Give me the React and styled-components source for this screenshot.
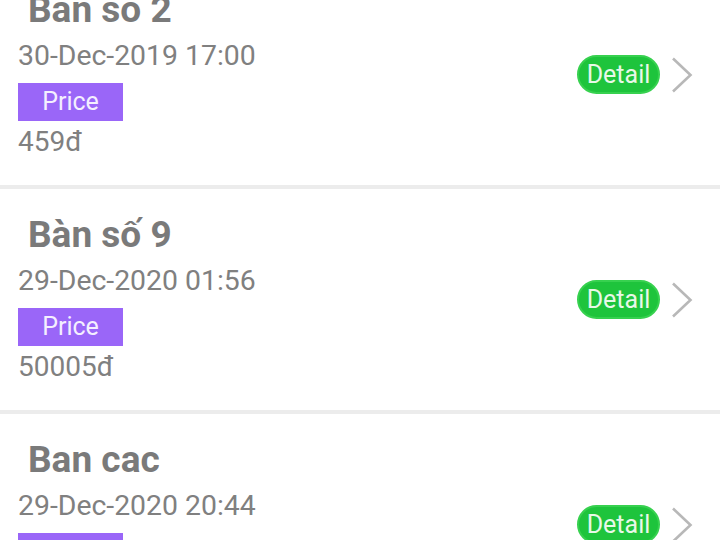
import React from "react"
import styled, { createGlobalStyle } from "styled-components"

const GlobalStyle = createGlobalStyle`
  html, body {
    margin: 0;
    padding: 0;
    background: #ffffff;
    font-family: Roboto, "Noto Sans", sans-serif;
    overflow: hidden;
  }
`

const tables = [
  { name: "Bàn số 2", date: "30-Dec-2019 17:00", price: "459đ" },
  { name: "Bàn số 9", date: "29-Dec-2020 01:56", price: "50005đ" },
  { name: "Ban cac", date: "29-Dec-2020 20:44", price: "1200đ" },
]

const App = () => (
  <>
    <GlobalStyle />
    <List>
      {tables.map((t, i) => (
        <Item key={i}>
          <Info>
            <Title>{t.name}</Title>
            <DateText>{t.date}</DateText>
            <PriceTag>Price</PriceTag>
            <PriceValue>{t.price}</PriceValue>
          </Info>
          <Actions>
            <DetailButton>Detail</DetailButton>
            <Chevron width="22" height="36" viewBox="0 0 22 36">
              <path d="M2 1.5 L19.5 18 L2 34.5" fill="none" stroke="#b8b8b8" strokeWidth="2.6" />
            </Chevron>
          </Actions>
        </Item>
      ))}
    </List>
  </>
)

const List = styled.div`
  margin-top: -36px;
  display: flex;
  flex-direction: column;
`

const Item = styled.div`
  height: 221px;
  display: flex;
  align-items: center;
  justify-content: space-between;
  padding: 0 27px 0 18px;
  border-bottom: 4px solid #ececec;
  box-sizing: content-box;
`

const Info = styled.div`
  display: flex;
  flex-direction: column;
  align-items: flex-start;
  padding-top: 12px;
  align-self: flex-start;
`

const Title = styled.div`
  font-size: 37px;
  font-weight: 700;
  color: #7a7a7a;
  line-height: 44px;
  padding-left: 10px;
  margin-top: 12px;
`

const DateText = styled.div`
  font-size: 28.4px;
  color: #808080;
  line-height: 34px;
  margin-top: 7px;
`

const PriceTag = styled.div`
  width: 105px;
  height: 38px;
  background: #9a66f8;
  color: #f4efff;
  font-size: 25px;
  line-height: 38px;
  text-align: center;
  margin-top: 10px;
`

const PriceValue = styled.div`
  font-size: 28px;
  color: #808080;
  line-height: 34px;
  margin-top: 4px;
`

const Actions = styled.div`
  display: flex;
  align-items: center;
  gap: 11px;
`

const DetailButton = styled.button`
  width: 83px;
  height: 39px;
  border-radius: 20px;
  border: 2px solid #37d14f;
  background: #1ec43c;
  color: #e8f8e8;
  font-family: Roboto, "Noto Sans", sans-serif;
  font-size: 25px;
  padding: 0;
  line-height: 35px;
`

const Chevron = styled.svg`
  display: block;
`

export default App
